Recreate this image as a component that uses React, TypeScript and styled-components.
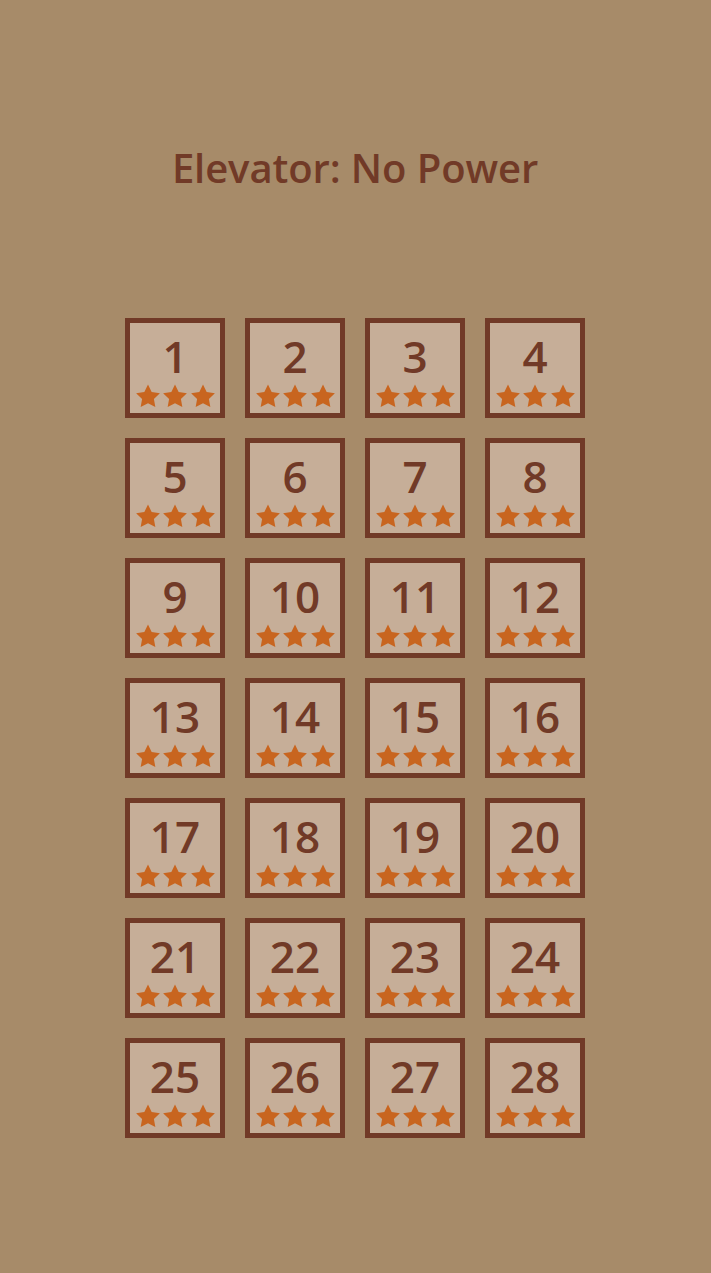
import React from "react"
import styled, { createGlobalStyle } from "styled-components"

const COLOR = {
  BG: "#a78b69",
  TILE: "#c6ae98",
  BROWN: "#713a27",
  STAR: "#c8651f",
}

const GlobalStyle = createGlobalStyle`
  body {
    margin: 0;
    background-color: ${COLOR.BG};
    font-family: "Open Sans", "Noto Sans", sans-serif;
  }
`

const Page = styled.div`
  display: flex;
  flex-direction: column;
  align-items: center;
  min-height: 1273px;
  padding-right: 1px;
`

const Title = styled.h1`
  margin: 141px 0 0;
  height: 54px;
  line-height: 54px;
  font-size: 40px;
  font-weight: 600;
  letter-spacing: -0.1px;
  color: ${COLOR.BROWN};
`

const Grid = styled.div`
  display: grid;
  grid-template-columns: repeat(4, 100px);
  gap: 20px;
  margin-top: 123px;
`

const Level = styled.button`
  display: flex;
  flex-direction: column;
  align-items: center;
  width: 100px;
  height: 100px;
  padding: 0;
  box-sizing: border-box;
  border: 5px solid ${COLOR.BROWN};
  background-color: ${COLOR.TILE};
  font-family: inherit;
  cursor: pointer;
`

const Number = styled.span`
  margin-top: 9px;
  height: 48px;
  line-height: 48px;
  font-size: 44px;
  font-weight: 600;
  color: ${COLOR.BROWN};
`

const Stars = styled.div`
  display: flex;
  gap: 3.5px;
  margin-top: 4px;
`

const Star = () => (
  <svg width="24" height="24" viewBox="0 0 24 24">
    <polygon
      points="12,0.5 15.65,7.98 23.89,9.14 17.9,14.92 19.35,23.11 12,19.2 4.65,23.11 6.1,14.92 0.11,9.14 8.35,7.98"
      fill={COLOR.STAR}
    />
  </svg>
)

const levels = Array.from({ length: 28 }, (_, i) => i + 1)

export default function App() {
  return (
    <>
      <GlobalStyle />
      <Page>
        <Title>Elevator: No Power</Title>
        <Grid>
          {levels.map((n) => (
            <Level key={n}>
              <Number>{n}</Number>
              <Stars>
                <Star />
                <Star />
                <Star />
              </Stars>
            </Level>
          ))}
        </Grid>
      </Page>
    </>
  )
}
